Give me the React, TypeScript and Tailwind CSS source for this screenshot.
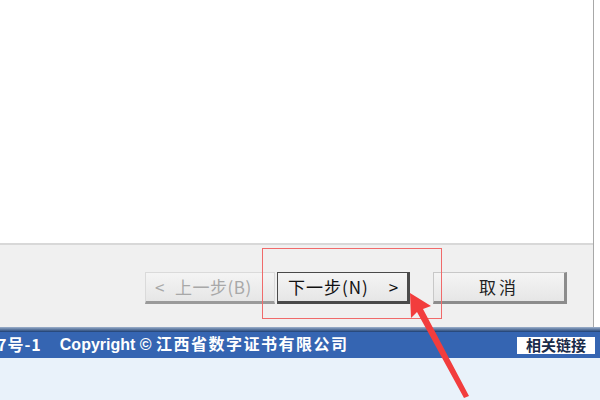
import React from "react";

const cjk = { fontFamily: '"Noto Sans CJK SC", "Liberation Sans", sans-serif' };

function ClassicButton({
  children,
  disabled,
  focused,
  className = "",
}: {
  children: React.ReactNode;
  disabled?: boolean;
  focused?: boolean;
  className?: string;
}) {
  return (
    <div
      className={`flex h-[32px] items-center bg-gradient-to-b from-[#f4f4f4] to-[#e6e6e6] text-[17px] ${
        focused
          ? "border border-[#4a4a4a] border-b-[3px] border-r-[3px] text-[#111]"
          : disabled
            ? "border border-[#dadada] border-b-[3px] border-b-[#9a9a9a] text-[#a8a8a8]"
            : "border border-[#c8c8c8] border-b-[3px] border-r-[3px] border-b-[#8c8c8c] border-r-[#8c8c8c] text-[#222]"
      } ${className}`}
      style={cjk}
    >
      {children}
    </div>
  );
}

export default function App() {
  return (
    <div className="relative h-[400px] w-[600px] overflow-hidden bg-white" style={cjk}>
      {/* dialog */}
      <div className="flex w-[594px] flex-col border-r border-[#a8a8a8]">
        <div className="h-[243px] bg-white" />
        <div className="h-[2px] bg-[#d8d8d8]" />
        <div className="flex h-[82px] items-start bg-[#f0f0f0] pt-[27px] pr-[26px]">
          <div className="ml-[145px] flex gap-[2px]">
            <ClassicButton disabled className="w-[130px] pl-[9px]">
              <span className="w-[20px]">&lt;</span>
              <span className="tracking-[0.5px]">上一步(B)</span>
            </ClassicButton>
            <ClassicButton focused className="w-[133px] pl-[10px]">
              <span className="tracking-[1px]">下一步(N)</span>
              <span className="ml-[20px]">&gt;</span>
            </ClassicButton>
          </div>
          <ClassicButton className="ml-[23px] w-[134px] justify-center tracking-[3px]">取消</ClassicButton>
        </div>
      </div>

      {/* footer of the page behind */}
      <div className="h-[5px] bg-gradient-to-b from-[#9fb2cc] to-[#1d3f73]" />
      <div className="flex h-[26px] items-center justify-between overflow-hidden bg-[#3565b2] text-[16px] font-semibold text-white">
        <div className="-ml-[3px] -mt-[2px] flex items-center gap-[18px]">
          <span className="tracking-[1px]">7号-1</span>
          <span style={{ fontFamily: '"Liberation Sans", "Noto Sans CJK SC", sans-serif' }}>
            Copyright © <span className="tracking-[1.5px]" style={cjk}>江西省数字证书有限公司</span>
          </span>
        </div>
        <div className="mr-[5px] flex h-[17px] w-[78px] items-center justify-center bg-white text-[15px] text-[#1a2b48]">
          相关链接
        </div>
      </div>
      <div className="h-[42px] bg-[#e9f2fa]" />

      {/* red annotation */}
      <div className="absolute left-[262px] top-[248px] h-[71px] w-[180px] border border-[#f06a6a]" />
      <svg className="absolute left-0 top-0" width="600" height="400" viewBox="0 0 600 400">
        <path d="M410 293 L431 306 L423 309 L469 396 L464 398 L417 312 L411 318 Z" fill="#f23d3d" />
      </svg>
    </div>
  );
}
